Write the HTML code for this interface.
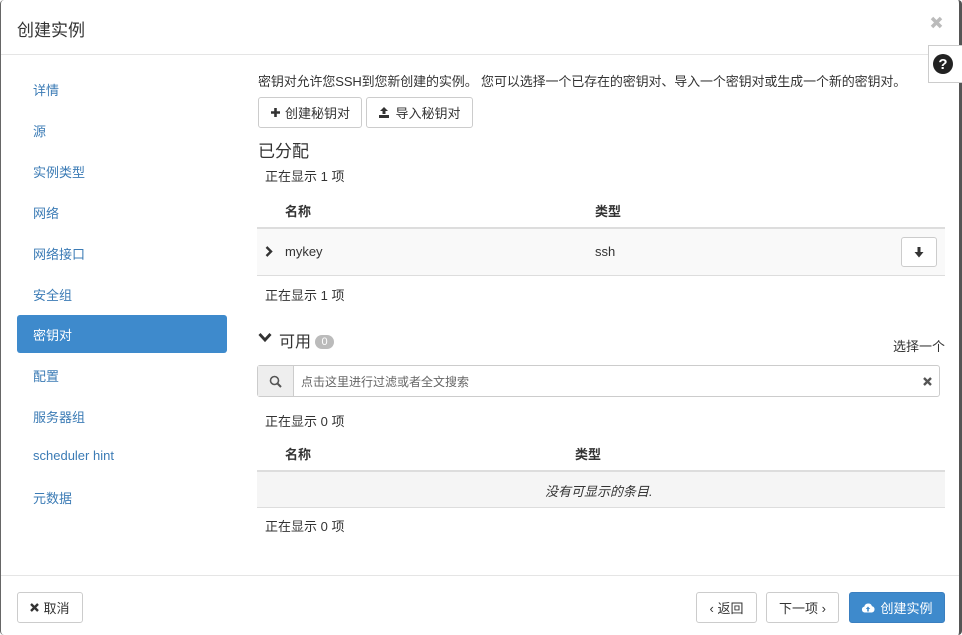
<!DOCTYPE html>
<html><head><meta charset="utf-8"><style>
*{box-sizing:border-box;margin:0;padding:0}
body{width:962px;height:635px;overflow:hidden;background:#fff;font-family:"Liberation Sans","Noto Sans CJK SC",sans-serif;font-size:13px;color:#333;position:relative}
.a{position:absolute;white-space:nowrap}
.frame{position:absolute;left:0;top:0;width:962px;height:635px;border-left:1px solid #666;border-right:3px solid #555;border-radius:4px}
.hl{position:absolute;height:1px;background:#e5e5e5}
.nav{position:absolute;left:33px;color:#3b7bb5;font-size:13px}
.btn{position:absolute;border:1px solid #ccc;border-radius:3px;background:#fff;font-size:13px;color:#333;display:flex;align-items:center;justify-content:center;white-space:nowrap}
</style></head><body>
<div class="frame"></div>
<div class="a" style="left:17px;top:16px;font-size:17px;color:#333">创建实例</div>
<svg class="a" style="left:930px;top:16px" width="13" height="13" viewBox="0 0 13 13"><path d="M2 2L11 11M11 2L2 11" stroke="#bbb" stroke-width="3.5"/></svg>
<div class="hl" style="left:1px;top:54px;width:958px"></div>
<div style="position:absolute;left:928px;top:45px;width:34px;height:38px;border:1px solid #ccc;border-right:none;background:#fff"></div>
<svg class="a" style="left:933px;top:54px" width="20" height="20" viewBox="0 0 20 20"><circle cx="10" cy="10" r="10" fill="#222"/><text x="10" y="15" text-anchor="middle" fill="#fff" font-size="15" font-weight="bold" font-family="Liberation Sans">?</text></svg>

<div class="nav" style="top:80px">详情</div>
<div class="nav" style="top:121px">源</div>
<div class="nav" style="top:162px">实例类型</div>
<div class="nav" style="top:203px">网络</div>
<div class="nav" style="top:244px">网络接口</div>
<div class="nav" style="top:285px">安全组</div>
<div style="position:absolute;left:17px;top:315px;width:210px;height:38px;background:#3e8acc;border-radius:3px"></div>
<div class="nav" style="top:325px;color:#fff">密钥对</div>
<div class="nav" style="top:366px">配置</div>
<div class="nav" style="top:407px">服务器组</div>
<div class="nav" style="top:448px">scheduler hint</div>
<div class="nav" style="top:488px">元数据</div>

<div class="a" style="left:258px;top:71px;font-size:13px;letter-spacing:-0.12px">密钥对允许您SSH到您新创建的实例。 您可以选择一个已存在的密钥对、导入一个密钥对或生成一个新的密钥对。</div>
<div class="btn" style="left:258px;top:97px;width:104px;height:31px"><svg width="11" height="11" viewBox="0 0 11 11" style="margin-right:4px"><path d="M5.5 1V10M1 5.5H10" stroke="#333" stroke-width="2.6"/></svg>创建秘钥对</div>
<div class="btn" style="left:366px;top:97px;width:107px;height:31px"><svg width="12" height="11" viewBox="0 0 12 11" style="margin-right:5px"><path d="M6 0L10 4H7.5V7H4.5V4H2Z" fill="#333"/><rect x="1" y="8" width="10" height="3" fill="#333"/></svg>导入秘钥对</div>
<div class="a" style="left:258px;top:137px;font-size:17px">已分配</div>
<div class="a" style="left:265px;top:166px">正在显示 1 项</div>
<div class="a" style="left:285px;top:201px;font-weight:bold">名称</div>
<div class="a" style="left:595px;top:201px;font-weight:bold">类型</div>
<div style="position:absolute;left:257px;top:227px;width:688px;height:49px;background:#f9f9f9;border-top:2px solid #ddd;border-bottom:1px solid #ddd"></div>
<svg class="a" style="left:265px;top:246px" width="8" height="11" viewBox="0 0 8 11"><path d="M1.5 1L6 5.5L1.5 10" stroke="#333" stroke-width="2.4" fill="none"/></svg>
<div class="a" style="left:285px;top:244px">mykey</div>
<div class="a" style="left:595px;top:244px">ssh</div>
<div class="btn" style="left:901px;top:237px;width:36px;height:30px"><svg width="10" height="11" viewBox="0 0 10 11"><path d="M3.5 0H6.5V5H9.5L5 10.5L0.5 5H3.5Z" fill="#333"/></svg></div>
<div class="a" style="left:265px;top:285px">正在显示 1 项</div>

<svg class="a" style="left:258px;top:332px" width="14" height="11" viewBox="0 0 14 11"><path d="M1.5 2L7 8L12.5 2" stroke="#333" stroke-width="2.8" fill="none"/></svg>
<div class="a" style="left:279px;top:328px;font-size:16px">可用 <span style="display:inline-block;background:#bbb;color:#fff;border-radius:9px;font-size:11px;padding:1px 6px;vertical-align:2px">0</span></div>
<div class="a" style="left:893px;top:336px">选择一个</div>
<div style="position:absolute;left:257px;top:365px;width:683px;height:32px;border:1px solid #ccc;border-radius:3px"></div>
<div style="position:absolute;left:258px;top:366px;width:36px;height:30px;background:#eee;border-right:1px solid #ccc"></div>
<svg class="a" style="left:269px;top:375px" width="13" height="13" viewBox="0 0 13 13"><circle cx="5.5" cy="5.5" r="4" stroke="#555" stroke-width="1.6" fill="none"/><path d="M8.5 8.5L12 12" stroke="#555" stroke-width="2"/></svg>
<div class="a" style="left:301px;top:373px;color:#666;font-size:12px">点击这里进行过滤或者全文搜索</div>
<svg class="a" style="left:923px;top:377px" width="9" height="9" viewBox="0 0 9 9"><path d="M1 1L8 8M8 1L1 8" stroke="#555" stroke-width="2.4"/></svg>
<div class="a" style="left:265px;top:411px">正在显示 0 项</div>
<div class="a" style="left:285px;top:444px;font-weight:bold">名称</div>
<div class="a" style="left:575px;top:444px;font-weight:bold">类型</div>
<div style="position:absolute;left:257px;top:470px;width:688px;height:38px;background:#f5f5f5;border-top:2px solid #ddd;border-bottom:1px solid #ddd"></div>
<div class="a" style="left:545px;top:481px;font-style:italic">没有可显示的条目.</div>
<div class="a" style="left:265px;top:516px">正在显示 0 项</div>

<div class="hl" style="left:1px;top:575px;width:958px"></div>
<div class="btn" style="left:17px;top:592px;width:66px;height:31px"><svg width="9" height="9" viewBox="0 0 9 9" style="margin-right:4px"><path d="M1 1L8 8M8 1L1 8" stroke="#333" stroke-width="2.4"/></svg>取消</div>
<div class="btn" style="left:696px;top:592px;width:61px;height:31px">‹ 返回</div>
<div class="btn" style="left:766px;top:592px;width:73px;height:31px">下一项 ›</div>
<div class="btn" style="left:849px;top:592px;width:96px;height:31px;background:#3e8acc;border-color:#3a7fc0;color:#fff"><svg width="14" height="11" viewBox="0 0 14 11" style="margin-right:5px"><path d="M3.5 10.5A3 3 0 0 1 3.3 4.6A4 4 0 0 1 11 4.2A3.2 3.2 0 0 1 10.8 10.5Z" fill="#fff"/><path d="M7 4.5L9.2 7H7.8V9.5H6.2V7H4.8Z" fill="#3e8acc"/></svg>创建实例</div>
</body></html>
